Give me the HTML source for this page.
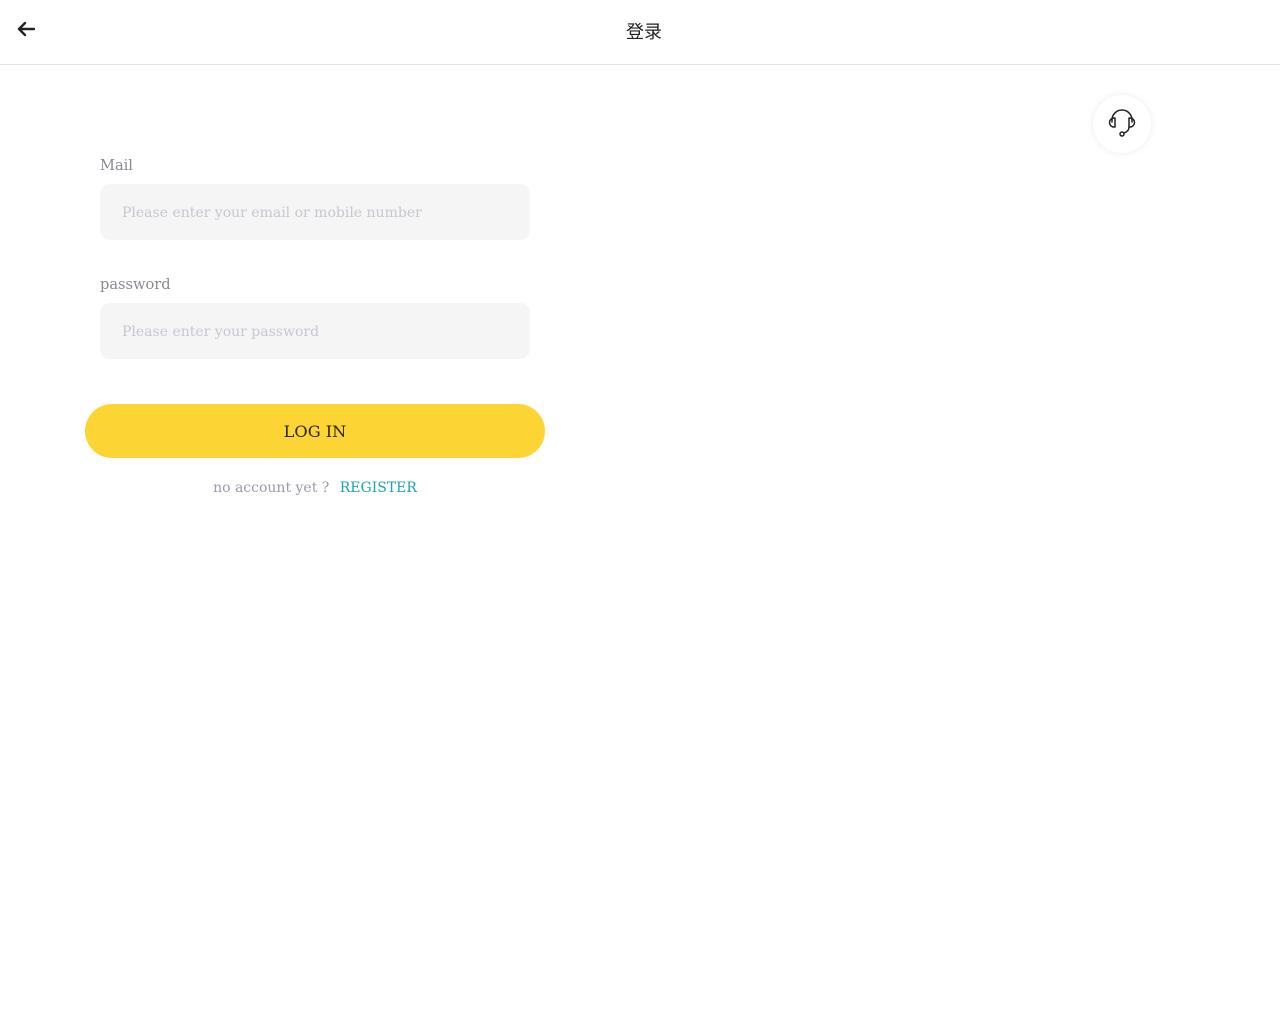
<!DOCTYPE html>
<html><head><meta charset="utf-8"><style>
body{margin:0;width:1280px;height:1024px;background:#fff;font-family:"DejaVu Serif","Noto Serif CJK SC",serif;position:relative;overflow:hidden}
.hdr{position:absolute;left:0;top:0;width:1280px;height:64px;border-bottom:1px solid #e4e4e4;}
.title{position:absolute;left:0;width:1280px;top:19px;text-align:center;font-size:18px;color:#222;font-family:"Noto Sans CJK SC",sans-serif;line-height:24px;padding-left:8px;box-sizing:border-box}
.back{position:absolute;left:17px;top:21px}
.lbl{position:absolute;left:100px;font-size:14.6px;color:#888a92}
.inp{position:absolute;left:100px;width:430px;height:56px;background:#f5f5f6;border-radius:10px;box-sizing:border-box;padding-left:22px;padding-top:1px;line-height:56px;font-size:14px;color:#c6c7d0}
.btn{position:absolute;left:85px;top:404px;width:460px;height:54px;border-radius:27px;background:#fcd535;text-align:center;line-height:54px;padding-top:1px;box-sizing:border-box;font-size:16.2px;color:#2a2510}
.reg{position:absolute;left:0;width:630px;top:480px;text-align:center;font-size:14px;color:#9a9ab0}
.reg span{color:#1aa5b0;margin-left:6px}
.cs{position:absolute;left:1093px;top:95px;width:58px;height:58px;border-radius:50%;background:#fff;box-shadow:0 0 8px rgba(0,0,0,.08)}
</style></head><body>
<div class="hdr">
<svg class="back" width="18" height="16" viewBox="0 0 18 16"><path d="M17 8H3M8 2L2 8l6 6" stroke="#222" stroke-width="2.4" fill="none" stroke-linecap="round" stroke-linejoin="round"/></svg>
<div class="title">登录</div>
</div>
<div class="cs"><svg width="58" height="58" viewBox="0 0 58 58"><g fill="none" stroke="#222" stroke-width="1.5" stroke-linecap="round" stroke-linejoin="round"><path d="M19 27v-2a10 10 0 0 1 20 0v2"/><path d="M22 23h-1a4.5 4.5 0 0 0 0 9h1z"/><path d="M36 23h1a4.5 4.5 0 0 1 0 9h-1z"/><path d="M36 32c0 3-2 5-5 6"/><circle cx="29" cy="39" r="2"/></g></svg></div>
<div class="lbl" style="top:157px">Mail</div>
<div class="inp" style="top:184px">Please enter your email or mobile number</div>
<div class="lbl" style="top:276px">password</div>
<div class="inp" style="top:303px">Please enter your password</div>
<div class="btn">LOG IN</div>
<div class="reg">no account yet ? <span>REGISTER</span></div>
</body></html>
